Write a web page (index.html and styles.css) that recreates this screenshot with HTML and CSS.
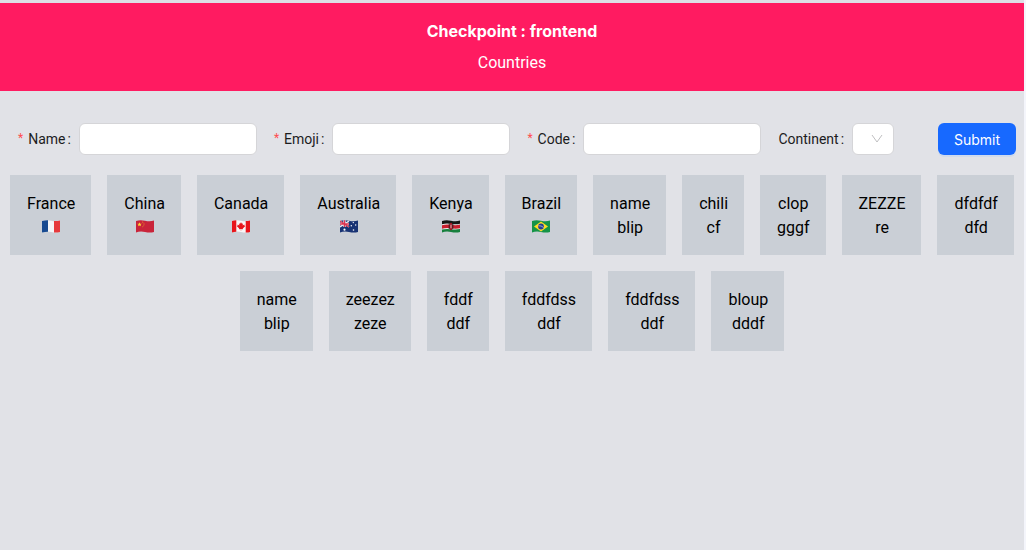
FILE: index.html
```html
<!DOCTYPE html>
<html lang="en">
<head>
<meta charset="utf-8">
<meta name="viewport" content="width=device-width, initial-scale=1">
<title>Countries</title>
<link rel="stylesheet" href="styles.css">
</head>
<body>
<div class="page">
  <header class="header">
    <h1 class="title">Checkpoint : frontend</h1>
    <a class="nav-link" href="#">Countries</a>
  </header>
  <main>
    <form class="form">
      <div class="field">
        <label class="label required" for="name">Name</label>
        <input class="input" id="name" type="text">
      </div>
      <div class="field">
        <label class="label required" for="emoji">Emoji</label>
        <input class="input" id="emoji" type="text">
      </div>
      <div class="field">
        <label class="label required" for="code">Code</label>
        <input class="input" id="code" type="text">
      </div>
      <div class="field">
        <label class="label" for="continent">Continent</label>
        <div class="select-wrap">
          <select class="select" id="continent"><option value=""></option></select>
          <svg class="chevron" viewBox="0 0 12 12" aria-hidden="true"><path d="M1 2 6 9l5-7" fill="none" stroke="#bfbfc1" stroke-width="1"/></svg>
        </div>
      </div>
      <button class="submit" type="submit">Submit</button>
    </form>
    <section class="countries">
      <a class="card" href="#"><span>France</span>
        <svg class="flag" viewBox="0 0 18 13" role="img" aria-label="Flag of France"><path fill="#f4f5f7" d="M0 1Q4-.5 9 .7T18 .5V12Q14 13 9 12T0 12.500Z"/><path fill="#174a91" d="M0 1Q3 0 6 .2V11.700Q3 11.700 0 12.500Z"/><path fill="#e63a3d" d="M12 1Q15 1.300 18 .5V12Q15 12.800 12 12.500Z"/></svg></a>
      <a class="card" href="#"><span>China</span>
        <svg class="flag" viewBox="0 0 18 13" role="img" aria-label="Flag of China"><path fill="#c9243a" d="M0 1Q4-.5 9 .7T18 .5V12Q14 13 9 12T0 12.500Z"/><path fill="#ffdc32" d="m3.500 2.300.6 1.400 1.600.1-1.200 1 .4 1.500-1.400-.8-1.400.8.4-1.500-1.200-1 1.600-.1z"/><path fill="none" stroke="#e8922d" stroke-width=".9" stroke-dasharray="1 .7" d="M6 2Q8.300 2.500 8 4.500T6 7"/></svg></a>
      <a class="card" href="#"><span>Canada</span>
        <svg class="flag" viewBox="0 0 18 13" role="img" aria-label="Flag of Canada"><path fill="#f8f6f6" d="M0 1Q4-.5 9 .7T18 .5V12Q14 13 9 12T0 12.500Z"/><path fill="#e8151b" d="M0 1Q2 .2 4.300.2V11.800Q2 11.900 0 12.500ZM13.700 1.100Q16 1.100 18 .5V12Q16 12.600 13.700 12.500ZM9 2.300l1 1.500.9-.3-.2 2 1.600-.9.2 1.100.8.4-2.500 2.300.2.8-1.800-.2V10.700h-.4V9l-1.800.2.2-.8-2.500-2.300.8-.4.2-1.100 1.600.9-.2-2 .9.3z"/></svg></a>
      <a class="card" href="#"><span>Australia</span>
        <svg class="flag" viewBox="0 0 18 13" role="img" aria-label="Flag of Australia"><path fill="#183374" d="M0 1Q4-.5 9 .7T18 .5V12Q14 13 9 12T0 12.500Z"/><path stroke="#e9e6ed" stroke-width="1.500" d="m0 1 9 6M9 1 0 7"/><path stroke="#f4edf1" stroke-width="2.400" d="M4.500 .3V7M0 4h9"/><path stroke="#dc3450" stroke-width="1.300" d="M4.500 .3V7M0 4h9M0 1l9 6"/><g fill="#fff"><circle cx="4.500" cy="9.700" r="1.100"/><circle cx="13.300" cy="2.600" r=".7"/><circle cx="11.300" cy="5.700" r=".7"/><circle cx="15.700" cy="5" r=".7"/><circle cx="13.500" cy="10" r=".8"/></g></svg></a>
      <a class="card" href="#"><span>Kenya</span>
        <svg class="flag" viewBox="0 0 18 13" role="img" aria-label="Flag of Kenya"><path fill="#151916" d="M0 1Q4-.5 9 .7T18 .5V5H0Z"/><path fill="#16803d" d="M0 8H18V12Q14 13 9 12T0 12.500Z"/><path fill="#eee" d="M0 4.300Q4 3 9 3.900T18 3.700V9.100Q14 10 9 9.200T0 9.600Z"/><path fill="#c91f2d" d="M0 5.200Q4 3.900 9 4.800T18 4.600V8.200Q14 9.100 9 8.300T0 8.700Z"/><ellipse cx="9" cy="6.500" rx="1.700" ry="3.800" fill="#9f1823"/><path stroke="#201719" stroke-width=".8" d="M7.200 4v5M10.800 4v5"/><path stroke="#fff" stroke-width=".7" d="M9 4.700v3.600"/></svg></a>
      <a class="card" href="#"><span>Brazil</span>
        <svg class="flag" viewBox="0 0 18 13" role="img" aria-label="Flag of Brazil"><path fill="#159447" d="M0 1Q4-.5 9 .7T18 .5V12Q14 13 9 12T0 12.500Z"/><path fill="#ffdc24" d="M9 1.500 16 6.400 9 11.500 2 6.500Z"/><circle cx="9" cy="6.500" r="2.900" fill="#263f91"/><path fill="none" stroke="#c5d6e4" stroke-width=".7" d="M6.300 5.800Q9.200 5.300 11.600 7.500"/></svg></a>
      <a class="card" href="#"><span>name</span><span>blip</span></a>
      <a class="card" href="#"><span>chili</span><span>cf</span></a>
      <a class="card" href="#"><span>clop</span><span>gggf</span></a>
      <a class="card" href="#"><span>ZEZZE</span><span>re</span></a>
      <a class="card" href="#"><span>dfdfdf</span><span>dfd</span></a>
      <a class="card" href="#"><span>name</span><span>blip</span></a>
      <a class="card" href="#"><span>zeezez</span><span>zeze</span></a>
      <a class="card" href="#"><span>fddf</span><span>ddf</span></a>
      <a class="card" href="#"><span>fddfdss</span><span>ddf</span></a>
      <a class="card" href="#"><span>fddfdss</span><span>ddf</span></a>
      <a class="card" href="#"><span>bloup</span><span>dddf</span></a>
    </section>
  </main>
</div>
</body>
</html>
```
FILE: styles.css
```css
* {
  box-sizing: border-box;
}

body {
  margin: 0;
  padding-right: 2px;
  background: #f4f5fb;
  font-family: Roboto, "Liberation Sans", sans-serif;
  color: #000;
}

.page {
  min-height: 100vh;
  border-top: 3px solid #dddfe6;
  background: #e1e2e7;
}

.header {
  display: flex;
  flex-direction: column;
  align-items: center;
  gap: 8px;
  padding: 16px;
  background: #ff1b61;
  color: #fff;
  line-height: 24px;
}

.title {
  margin: 0;
  font-family: Inter, "Liberation Sans", sans-serif;
  font-size: 16px;
  font-weight: 700;
}

.nav-link {
  color: inherit;
  font-size: 16px;
  text-decoration: none;
}

.form {
  display: flex;
  align-items: center;
  gap: 17px;
  padding: 32px 8px 20px 18px;
}

.field {
  display: flex;
  align-items: center;
  gap: 8px;
  min-width: 0;
}

.label {
  font-size: 14px;
  line-height: 24px;
  white-space: nowrap;
  color: #1c1c1e;
}

.label::after {
  content: ":";
  margin-left: 2px;
}

.required::before {
  content: "*";
  margin-right: 5px;
  font-size: 12px;
  line-height: 1;
  vertical-align: 2px;
  color: #ff4d4f;
}

.input,
.select {
  height: 32px;
  border: 1px solid #d5d5d8;
  border-radius: 6px;
  background: #fff;
  font: inherit;
  font-size: 14px;
}

.input {
  width: 178px;
  min-width: 0;
  padding: 4px 11px;
}

.select-wrap {
  display: grid;
  align-items: center;
  justify-items: end;
}

.select {
  grid-area: 1 / 1;
  width: 42px;
  appearance: none;
}

.chevron {
  grid-area: 1 / 1;
  width: 12px;
  height: 12px;
  margin-right: 11px;
  pointer-events: none;
}

.submit {
  height: 32px;
  margin-left: auto;
  padding: 0 16px;
  border: 0;
  border-radius: 6px;
  background: #1769ff;
  box-shadow: 0 2px 0 #cfdaed;
  color: #fff;
  font-family: Inter, "Liberation Sans", sans-serif;
  font-size: 14px;
}

.countries {
  display: flex;
  flex-wrap: wrap;
  justify-content: center;
  gap: 16px;
}

.card {
  display: flex;
  flex-direction: column;
  align-items: center;
  padding: 17px 16px 15px 17px;
  background: #cacfd6;
  color: inherit;
  font-size: 16px;
  line-height: 24px;
  text-decoration: none;
}

.flag {
  width: 18px;
  height: 13px;
  margin: 4px 0 7px;
}
```
